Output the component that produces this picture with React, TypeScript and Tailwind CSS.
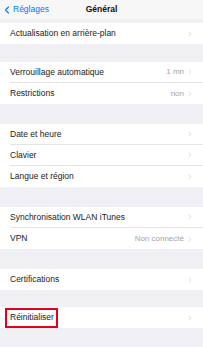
import { ChevronLeft, ChevronRight } from "lucide-react"

type Row = { label: string; value?: string; boxed?: boolean }

const SECTIONS: { rows: Row[]; gap: string }[] = [
  { gap: "h-[4px]", rows: [{ label: "Actualisation en arrière-plan" }] },
  { gap: "h-[18px]", rows: [{ label: "Verrouillage automatique", value: "1 mn" }, { label: "Restrictions", value: "non" }] },
  { gap: "h-[20px]", rows: [{ label: "Date et heure" }, { label: "Clavier" }, { label: "Langue et région" }] },
  { gap: "h-[20px]", rows: [{ label: "Synchronisation WLAN iTunes" }, { label: "VPN", value: "Non connecté" }] },
  { gap: "h-[20px]", rows: [{ label: "Certifications" }] },
  { gap: "h-[17px]", rows: [{ label: "Réinitialiser", boxed: true }] },
]

export default function App() {
  return (
    <div className="w-[203px] h-[347px] bg-[#efeff4] overflow-hidden font-['Liberation_Sans',Arial,sans-serif]">
      {/* Nav bar */}
      <div className="h-[19px] bg-[#f7f7f7] flex items-center relative">
        <div className="flex items-center text-[#007aff] text-[8.5px] pl-[1px]">
          <ChevronLeft size={12} strokeWidth={2.25} />
          <span>Réglages</span>
        </div>
        <div className="absolute inset-0 flex items-center justify-center text-[8.5px] font-semibold text-[#111]">
          Général
        </div>
      </div>

      {SECTIONS.map((s, i) => (
        <div key={i}>
          <div className={s.gap} />
          <div className="bg-white">
            {s.rows.map((r, j) => (
              <div key={j} className="pl-[10px]">
                <div
                  className={
                    "h-[21px] flex items-center pr-[9px] " +
                    (j < s.rows.length - 1 ? "border-b border-[#e4e4e8]" : "")
                  }
                >
                  <span className="flex-1 text-[8.5px] text-[#1a1a1a]">
                    {r.boxed ? (
                      <span className="inline-flex items-center h-[20px] -ml-[5px] border-2 border-[#e5001c] pl-[3px] w-[53px]">
                        {r.label}
                      </span>
                    ) : (
                      r.label
                    )}
                  </span>
                  {r.value && <span className="text-[8px] text-[#a4a4a9] mr-[2px]">{r.value}</span>}
                  <ChevronRight size={8} strokeWidth={1.75} className="text-[#c7c7cc]" />
                </div>
              </div>
            ))}
          </div>
        </div>
      ))}
    </div>
  )
}
